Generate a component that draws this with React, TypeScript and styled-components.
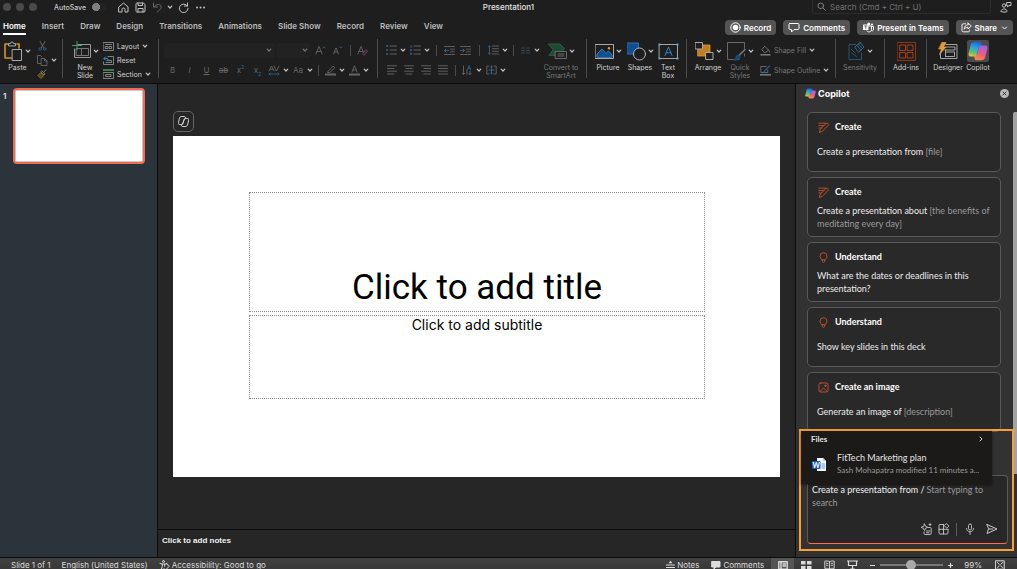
import React, { useState } from "react";
import styled, { createGlobalStyle } from "styled-components";

const ui = `Inter, "Liberation Sans", sans-serif`;
const humanist = `Lato, "Open Sans", sans-serif`;

const GlobalStyle = createGlobalStyle`
  *, *::before, *::after { box-sizing: border-box; }
  body { margin: 0; background: #1e1e1e; color: #e4e4e4; font-family: ${ui}; font-size: 8px; overflow: hidden; }
  button, input, select { font: inherit; color: inherit; margin: 0; padding: 0; border: 0; background: none; }
  button { cursor: pointer; white-space: nowrap; }
  input:focus, select:focus { outline: none; }
  svg { display: block; flex: none; }
`;

/* ---------- icon primitives ---------- */

type IconProps = { w: number; h: number; sw?: number; color?: string; children: React.ReactNode };

const Icon = ({ w, h, sw = 1, color, children }: IconProps) => (
  <svg width={w} height={h} viewBox={`0 0 ${w} ${h}`} fill="none" color={color} stroke="currentColor" strokeWidth={sw} strokeLinecap="round" strokeLinejoin="round" aria-hidden="true">
    {children}
  </svg>
);

const ChevronDown = () => (
  <Icon w={6} h={6} sw={1.2} color="#c4c4c4"><path d="M1.2 2.2 3 4 4.8 2.2" /></Icon>
);

const lobe = "M7 .8h4.500c1 0 1.500.5 1.800 1.500l.7 2.500c-2 .2-3 1.300-3.500 3.200L8.700 14c-.3 1.200-1 1.600-2 1.600H3C1 15.600.2 14.500.6 12.500L2.700 4C3.300 1.800 4.500.8 7 .8z";

const CopilotLogo = ({ size }: { size: number }) => {
  const id = `copilot${size}`;
  return (
    <svg width={size} height={size} viewBox="0 0 20 20" aria-hidden="true">
      <defs>
        <linearGradient id={`${id}a`} x1="0.6" y1="0" x2="0.3" y2="1">
          <stop offset="0" stopColor="#1f5fd6" />
          <stop offset="0.4" stopColor="#26a6e0" />
          <stop offset="0.75" stopColor="#67c26a" />
          <stop offset="1" stopColor="#f2c02f" />
        </linearGradient>
        <linearGradient id={`${id}b`} x1="0.6" y1="0" x2="0.3" y2="1">
          <stop offset="0" stopColor="#f58a4b" />
          <stop offset="0.4" stopColor="#ee5a86" />
          <stop offset="1" stopColor="#a85be8" />
        </linearGradient>
      </defs>
      <path d={lobe} fill={`url(#${id}b)`} transform="rotate(180 10 10)" />
      <path d={lobe} fill={`url(#${id}a)`} />
    </svg>
  );
};

/* ---------- title bar ---------- */

const Window = styled.div`
  display: flex;
  flex-direction: column;
  height: 100vh;
  overflow: hidden;
`;

const TitleBar = styled.header`
  display: grid;
  grid-template-columns: 1fr auto 1fr;
  align-items: center;
  height: 14px;
  flex: none;
`;

const TitleLeft = styled.div`
  display: flex;
  align-items: center;
  gap: 5px;
  padding-left: 3px;
`;

const WindowDot = styled.span`
  width: 8px;
  height: 8px;
  border-radius: 50%;
  background: #4a4a4a;
`;

const AutoSave = styled.label`
  display: flex;
  align-items: center;
  gap: 6px;
  margin-left: 12px;
  font-size: 7px;
  font-weight: 500;
  color: #c8c8c8;
`;

const Toggle = styled.input`
  appearance: none;
  width: 15px;
  height: 8px;
  border-radius: 4px;
  background: radial-gradient(circle at 4px 4px, #808080 4px, transparent 4px) #222;
`;

const QuickButton = styled.button<{ $w?: number; $dim?: boolean }>`
  display: flex;
  justify-content: center;
  width: ${(p) => p.$w ?? 12}px;
  color: ${(p) => (p.$dim ? "#6a6a6a" : "#c4c4c4")};
`;

const QuickAccess = styled.div`
  display: flex;
  align-items: center;
  gap: 5px;
  margin-left: 5px;
`;

const DocTitle = styled.h1`
  margin: 0;
  font-size: 8px;
  font-weight: 500;
  color: #e4e4e4;
`;

const TitleRight = styled.div`
  display: flex;
  justify-content: flex-end;
  align-items: center;
  gap: 9px;
  padding-right: 5px;
`;

const SearchBox = styled.label`
  display: flex;
  align-items: center;
  gap: 4px;
  width: 179px;
  height: 14px;
  padding-left: 4px;
  border: 1px solid #2b2b2b;
  border-top: 0;
  border-radius: 0 0 3px 3px;
  color: #8a8a8a;
`;

const SearchInput = styled.input`
  flex: 1;
  min-width: 0;
  &::placeholder { color: #737373; opacity: 1; }
`;

/* ---------- tabs ---------- */

const TabRow = styled.div`
  display: flex;
  justify-content: space-between;
  align-items: center;
  height: 24px;
  padding: 3px 4px 0 3px;
  flex: none;
`;

const Tabs = styled.nav`
  display: flex;
  gap: 16px;
`;

const Tab = styled.button<{ $active?: boolean }>`
  height: 15px;
  padding-bottom: 1px;
  border-bottom: 2px solid ${(p) => (p.$active ? "#fff" : "transparent")};
  line-height: 12px;
  font-weight: 600;
  color: ${(p) => (p.$active ? "#fff" : "#bcbcbc")};
`;

const Actions = styled.div`
  display: flex;
  gap: 7px;
`;

const ActionButton = styled.button`
  display: flex;
  align-items: center;
  gap: 3px;
  height: 15px;
  padding: 0 5px;
  border-radius: 4px;
  background: #545454;
  color: #fff;
  font-weight: 600;
`;

/* ---------- ribbon ---------- */

const Ribbon = styled.div`
  display: flex;
  height: 46px;
  padding-top: 1px;
  border-bottom: 1px solid #0c0c0c;
  flex: none;
`;

const Group = styled.section<{ $w?: number; $pad?: number }>`
  display: flex;
  flex: none;
  width: ${(p) => (p.$w ? `${p.$w}px` : "auto")};
  height: 39px;
  padding-left: ${(p) => p.$pad ?? 5}px;
  border-right: ${(p) => (p.$w ? "1px solid #4a4a4a" : "0")};
`;

const BigButton = styled.button<{ $w: number; $dim?: boolean }>`
  display: flex;
  flex-direction: column;
  align-items: center;
  flex: none;
  width: ${(p) => p.$w}px;
  height: 41px;
  padding-top: 1px;
  font-size: 7px;
  line-height: 8px;
  color: ${(p) => (p.$dim ? "#787878" : "#d2d2d2")};
`;

const BigIcon = styled.span<{ $lit?: boolean }>`
  display: flex;
  align-items: center;
  justify-content: center;
  gap: 2px;
  min-width: 22px;
  height: 22px;
  margin-bottom: 2px;
  border-radius: 2px;
  background: ${(p) => (p.$lit ? "#4c4c4c" : "transparent")};
`;

const Stack = styled.div<{ $top?: number; $left?: number }>`
  display: flex;
  flex-direction: column;
  padding-top: ${(p) => p.$top ?? 0}px;
  padding-left: ${(p) => p.$left ?? 0}px;
`;

const Row = styled.div<{ $h: number }>`
  display: flex;
  align-items: center;
  flex: none;
  height: ${(p) => p.$h}px;
`;

const Cell = styled.button<{ $w?: number }>`
  display: flex;
  align-items: center;
  justify-content: center;
  width: ${(p) => p.$w ?? 16}px;
  height: 14px;
  color: #666;
`;

const Drop = styled(Cell)`
  width: 8px;
`;

const CellRule = styled.span<{ $w: number }>`
  display: flex;
  justify-content: center;
  width: ${(p) => p.$w}px;
  &::before { content: ""; width: 1px; height: 11px; background: #4a4a4a; }
`;

const TextButton = styled.button<{ $dim?: boolean }>`
  display: flex;
  align-items: center;
  gap: 3px;
  font-size: 7px;
  color: ${(p) => (p.$dim ? "#787878" : "#d2d2d2")};
`;

const SelectBox = styled.span<{ $w: number }>`
  display: flex;
  align-items: center;
  width: ${(p) => p.$w}px;
  height: 15px;
  margin-right: 1px;
  padding-right: 3px;
  border-radius: 2px;
  background: #222;
  svg { color: #777; }
`;

const Select = styled.select`
  appearance: none;
  flex: 1;
  min-width: 0;
  height: 15px;
`;

/* ---------- workspace ---------- */

const Workspace = styled.main`
  display: flex;
  flex: 1;
  min-height: 0;
`;

const Thumbs = styled.aside`
  display: flex;
  align-items: flex-start;
  gap: 6px;
  width: 158px;
  flex: none;
  padding: 4px 12px 0 3px;
  border-right: 1px solid #0c0c0c;
  background: #2a343a;
`;

const ThumbNumber = styled.span`
  width: 4px;
  padding-top: 3px;
  line-height: 10px;
  font-weight: 600;
`;

const Thumb = styled.button`
  flex: 1;
  height: 76px;
  border: 2px solid #ef6c52;
  border-radius: 4px;
  background: #fff;
  box-shadow: inset 0 0 0 1px #c9c9c9;
`;

const Editor = styled.section`
  display: flex;
  flex-direction: column;
  flex: 1;
  min-width: 0;
  background: #262626;
`;

const Canvas = styled.div`
  display: flex;
  flex-direction: column;
  align-items: flex-start;
  gap: 4px;
  flex: 1;
  min-height: 0;
  padding: 27px 15px 0;
`;

const CopilotChip = styled.button`
  display: grid;
  place-items: center;
  width: 21px;
  height: 21px;
  border: 1px solid #656565;
  border-radius: 5px;
  color: #d8d8d8;
`;

const Slide = styled.div`
  display: flex;
  flex-direction: column;
  gap: 3px;
  width: 100%;
  aspect-ratio: 16 / 9;
  padding: 56px 75px 0 76px;
  background: #fff;
  color: #000;
`;

const Placeholder = styled.div<{ $h: number; $end?: boolean }>`
  display: flex;
  align-items: ${(p) => (p.$end ? "flex-end" : "flex-start")};
  height: ${(p) => p.$h}px;
  border: 1px dotted #8a8a8a;
`;

const TitleInput = styled.input`
  width: 100%;
  height: 47px;
  font-family: Roboto, sans-serif;
  font-size: 35px;
  text-align: center;
  &::placeholder { color: #000; opacity: 1; }
`;

const SubtitleInput = styled(TitleInput)`
  height: 17px;
  font-family: ${ui};
  font-size: 14px;
`;

const NotesPane = styled.div`
  height: 28px;
  padding: 4px;
  border-top: 1px solid #0c0c0c;
`;

const NotesInput = styled.input`
  display: block;
  width: 100%;
  height: 12px;
  font-family: "Liberation Sans", sans-serif;
  font-weight: 700;
  &::placeholder { color: #f0f0f0; opacity: 1; }
`;

/* ---------- copilot panel ---------- */

const Panel = styled.aside`
  position: relative;
  display: flex;
  flex-direction: column;
  width: 222px;
  flex: none;
  border-left: 1px solid #0c0c0c;
  background: #323232;
`;

const PanelHead = styled.div`
  display: flex;
  align-items: center;
  gap: 2px;
  height: 18px;
  padding: 0 8px 0 9px;
  flex: none;
`;

const PanelTitle = styled.h2`
  flex: 1;
  margin: 0;
  font-size: 9px;
  font-weight: 700;
  color: #fff;
`;

const CloseButton = styled.button`
  color: #323232;
`;

const Cards = styled.div`
  display: flex;
  flex-direction: column;
  gap: 5px;
  flex: 1;
  min-height: 0;
  overflow: hidden;
  padding: 10px 16px 0 11px;
  font-family: ${humanist};
  font-size: 9px;
`;

const Card = styled.button`
  display: flex;
  flex-direction: column;
  flex: none;
  height: 60px;
  padding: 7px 8px 0 9px;
  border: 1px solid #5a5a5a;
  border-radius: 5px;
  background: #292929;
  text-align: left;
  white-space: normal;
  color: #ececec;
`;

const CardHead = styled.span`
  display: flex;
  align-items: center;
  gap: 6px;
  height: 14px;
  padding-left: 1px;
  line-height: 12px;
  font-weight: 700;
  color: #fff;
  svg { color: #c8532c; }
`;

const CardBody = styled.span`
  display: flex;
  align-items: center;
  flex: 1;
  padding-bottom: 2px;
  line-height: 13px;
`;

const Muted = styled.span`
  color: #9a9a9a;
`;

const Scrollbar = styled.div`
  position: absolute;
  top: 28px;
  right: 0;
  bottom: 83px;
  width: 4px;
  border-radius: 2px 0 0 2px;
  background: #a3a3a3;
`;

const PromptFrame = styled.div`
  position: relative;
  z-index: 1;
  flex: none;
  margin: -4px 3px 6px;
  padding: 44px 4px 5px 6px;
  border: 2px solid #f6a03a;
  font-family: ${humanist};
  font-size: 9px;
`;

const FileMenu = styled.div`
  position: absolute;
  top: 0;
  left: 0;
  width: 191px;
  height: 53px;
  background: #1b1a19;
  box-shadow: 0 1px 3px rgba(0, 0, 0, 0.5);
`;

const FileMenuHead = styled.button`
  display: flex;
  justify-content: space-between;
  align-items: center;
  width: 100%;
  height: 16px;
  padding: 0 8px 0 10px;
  font-size: 8px;
  font-weight: 700;
`;

const FileItem = styled.button`
  display: flex;
  align-items: center;
  gap: 10px;
  padding: 5px 0 0 11px;
  text-align: left;
`;

const FileText = styled.span`
  display: flex;
  flex-direction: column;
  line-height: 12px;
  small { font-size: 8px; color: #9a9a9a; }
`;

const Composer = styled.div`
  display: flex;
  flex-direction: column;
  justify-content: space-between;
  height: 69px;
  padding: 7px 8px 7px 4px;
  border: 1px solid #5a5a5a;
  border-bottom: 1px solid #ff6f47;
  border-radius: 4px;
  background: #272727;
`;

const PromptLine = styled.label`
  display: block;
  line-height: 13px;
`;

const PromptInput = styled.input`
  field-sizing: content;
  height: 13px;
  margin-right: 2px;
  color: #f2f2f2;
`;

const Tools = styled.div`
  display: flex;
  align-items: center;
  justify-content: flex-end;
  gap: 6px;
  height: 14px;
  color: #c8c8c8;
`;

const ToolRule = styled.span`
  width: 1px;
  height: 13px;
  background: #5a5a5a;
`;

/* ---------- status bar ---------- */

const StatusBar = styled.footer`
  display: flex;
  justify-content: space-between;
  height: 12px;
  flex: none;
  background: linear-gradient(#414141, #383838);
  border-top: 1px solid #0c0c0c;
  color: #dcdcdc;
`;

const StatusGroup = styled.div<{ $gap: number }>`
  display: flex;
  align-items: center;
  gap: ${(p) => p.$gap}px;
  height: 14px;
  padding: 0 12px 0 11px;
`;

const StatusButton = styled.button<{ $lit?: boolean }>`
  display: flex;
  align-items: center;
  justify-content: center;
  gap: 2px;
  min-width: ${(p) => (p.$lit ? 23 : 0)}px;
  height: 14px;
  background: ${(p) => (p.$lit ? "#555" : "none")};
`;

const Views = styled.div`
  display: flex;
  align-items: center;
  gap: 12px;
  margin-left: -5px;
`;

const ZoomControl = styled.div`
  display: flex;
  align-items: center;
  gap: 5px;
  margin-right: 1px;
`;

const ZoomSlider = styled.input`
  appearance: none;
  width: 63px;
  height: 10px;
  background: linear-gradient(#777, #777) center / 100% 2px no-repeat;
  &::-webkit-slider-thumb {
    appearance: none;
    width: 10px;
    height: 10px;
    border-radius: 50%;
    background: #a8a8a8;
  }
`;

const ZoomValue = styled.span`
  margin-left: 6px;
`;

/* ---------- drawings ---------- */

const lines = (ys: number[], x1: number, x2: number) => ys.map((y) => <path key={y} d={`M${x1} ${y}H${x2}`} />);

const BLUE = "#285a80";

const PasteIcon = () => (
  <Icon w={19} h={21}>
    <path d="M4 3H1v14h7M13 3h2v4" stroke="#d98f2b" strokeWidth="1.6" />
    <path d="M4.500 4.500v-2h2a1.500 1.500 0 0 1 3 0h2v2z" stroke="#aaa" />
    <rect x="8.500" y="8.500" width="9" height="11" fill="#1e1e1e" stroke="#aaa" />
  </Icon>
);
const NewSlideIcon = () => (
  <Icon w={19} h={20}>
    <path d="M6 3.500h12.500v13H2.500V8" stroke="#999" />
    <path d="M4.500 7.500h12v7h-12zM9.500 7.500v7M4.500 11" stroke="#777" />
    <path d="M5 0v9M.5 4.500h9" stroke="#3fa465" />
  </Icon>
);
const LayoutIcon = () => (
  <Icon w={11} h={9}><path d="M.5.5h10v8H.5zM2.500 2.500h6M2.500 4.500h2.500v2H2.500zM6.500 4.500h2v2h-2z" stroke="#999" strokeWidth=".8" /></Icon>
);
const ResetIcon = () => (
  <Icon w={11} h={9}>
    <path d="M5 .5h5.500v8H.5V6M4 4.500h4.500v2H3" stroke="#999" strokeWidth=".8" />
    <path d="M1 2.500h3.500M2.500.8.8 2.500l1.700 1.700M4.500 2.500c1 0 1 2 0 2" stroke="#2f86c5" />
  </Icon>
);
const SectionIcon = () => (
  <Icon w={11} h={10}>
    <path d="M0 1h11" stroke="#3fa465" strokeWidth="1.4" />
    <path d="M.5 3.500h10v6H.5zM3 5.500h5v2H3z" stroke="#999" strokeWidth=".8" />
  </Icon>
);
const CutIcon = () => (
  <Icon w={9} h={10}><path d="M2 .5 5.800 7M7 .5 3.200 7" stroke="#777" strokeWidth=".8" /><circle cx="2.300" cy="8" r="1.300" stroke={BLUE} /><circle cx="6.700" cy="8" r="1.300" stroke={BLUE} /></Icon>
);
const CopyIcon = () => (
  <Icon w={11} h={11} sw={0.9}><path d="M3.500 8.500h-3v-8h3l1.500 1.500M4.500 3.500h3l2.500 2.500v4.500h-5.500zM7.500 3.500v2.500h2.500" /></Icon>
);
const BrushIcon = () => (
  <Icon w={10} h={10}><path d="M9 .8 6.500 3.500M4 3l3 3 1-1-3-3z" stroke="#777" /><path d="M3.500 4 .8 6.500l3 3L6.500 7z" stroke="#8a6226" fill="#5c4522" /></Icon>
);
const SmartArtIcon = () => (
  <Icon w={19} h={18}>
    <path d="M.5 2h11.500l4.500 4.500-2 3H7v4H1l4-5.500z" fill="#1d4a30" stroke="#2c5f42" />
    <path d="M7.500 9.500h11v7h-11zM10 12h6M10 14h6" fill="#1e1e1e" stroke="#6a6a6a" />
  </Icon>
);
const PictureIcon = () => (
  <Icon w={19} h={15}>
    <rect x=".5" y=".5" width="18" height="14" stroke="#aaa" />
    <path d="M2 13V10l5-5 4 4.500 2.500-2.500 3.500 4V13z" fill="#0e4f92" stroke="#3f8fd0" strokeWidth=".8" />
    <circle cx="14" cy="4.300" r="1.200" fill="#e39a34" stroke="none" />
  </Icon>
);
const ShapesIcon = () => (
  <Icon w={19} h={19}>
    <rect x=".5" y="1" width="11" height="11" fill="#0e4f92" stroke="#2a74ba" />
    <circle cx="12.500" cy="12" r="6" fill="#1e1e1e" stroke="#b4b4b4" />
  </Icon>
);
const TextBoxIcon = () => (
  <Icon w={21} h={17}>
    <rect x="1.500" y="1.500" width="18" height="14" stroke="#a4a4a4" />
    <path d="M7 12.500 10.500 4l3.500 8.500M8.200 9.800h4.600" stroke="#2f86c5" />
    <path d="M.5.5h2v2h-2zM18.500.5h2v2h-2zM.5 14.500h2v2h-2zM18.500 14.500h2v2h-2z" fill="#5aa4dc" stroke="none" />
  </Icon>
);
const ArrangeIcon = () => (
  <Icon w={19} h={18}>
    <rect x="3" y="3" width="12" height="11" fill="#c47d1c" stroke="#e09a38" strokeWidth=".8" />
    <rect x=".5" y=".5" width="7" height="6.500" fill="#1e1e1e" stroke="#aaa" />
    <rect x="11" y="10.500" width="7" height="7" fill="#1e1e1e" stroke="#aaa" />
  </Icon>
);
const QuickStylesIcon = () => (
  <Icon w={19} h={19}>
    <path d="M12 17.500H.5V.5h17v6M17.500 12v2" stroke="#686868" />
    <path d="M18 7.500 12.500 13" stroke="#777" strokeWidth="1.600" />
    <path d="M12 13c-2 0-3 1-3.200 2.500-.2 1-1 2-2.300 2.300 3 .8 6 .2 6.500-2.600z" fill="#164672" stroke={BLUE} strokeWidth=".8" />
  </Icon>
);
const FillIcon = () => (
  <Icon w={11} h={11}><path d="M5 1.500 8.500 5 5 7.800 2 5zM8.500 5l1.200 2" stroke="#777" strokeWidth=".9" /><path d="M.5 9.800h10" stroke="#777" strokeWidth="1.600" strokeLinecap="butt" /></Icon>
);
const OutlineIcon = () => (
  <Icon w={11} h={11}><path d="M6 1.500H.8V7.500h7V5" stroke="#777" strokeWidth=".8" /><path d="M9.500 1 4 6.500" stroke={BLUE} strokeWidth="1.400" /><path d="M0 9.800h11" stroke="#777" strokeWidth="1.600" strokeLinecap="butt" /></Icon>
);
const SensitivityIcon = () => (
  <Icon w={17} h={20}>
    <path d="M8 3.500H1v15h12.500V12M3.500 8.500 7 12M3.500 12l5 3.500" stroke="#285a80" strokeWidth=".9" />
    <path d="m7 6 5-4.500 4 4.500-5 5zM9 4.500l4 4.500M10.500 3l4 4.500M12 .8l1.500 1.500" stroke="#34709c" strokeWidth=".9" />
  </Icon>
);
const AddInsIcon = () => (
  <Icon w={19} h={19}>
    <rect x=".5" y=".5" width="18" height="18" stroke="#8c3416" />
    <path d="M3 3h5.500v5.500H3zM10.500 3H16v5.500h-5.500zM3 10.500h5.500V16H3zM10.500 10.500H16V16h-5.500z" stroke="#ab3f1a" />
  </Icon>
);
const DesignerIcon = () => (
  <Icon w={20} h={19}>
    <path d="M8 2.500h11v14H2.500V12M8 5h9v3H7M7.500 8v6.500M7.500 14.500h9V10h-9" stroke="#a4a4a4" />
    <path d="M4 .5h4L5.500 5H8L1.500 12.500 3.500 7H1z" fill="#e69b35" stroke="#f0b055" strokeWidth=".6" />
  </Icon>
);

const Bullets = () => (
  <Icon w={11} h={10} sw={0.9}>{lines([1, 5, 9], 4, 10.5)}<path d="M1 1h.1M1 5h.1M1 9h.1" stroke="#2f6a98" strokeWidth="1.800" /></Icon>
);
const Numbers = () => (
  <Icon w={11} h={10} sw={0.9}>{lines([1, 5, 9], 4, 10.5)}<path d="M1 .5v1.800M.5 4.500h1v1h-1M.5 8h1v1.500h-1" stroke="#2f6a98" /></Icon>
);
const Indent = ({ flip }: { flip?: boolean }) => (
  <Icon w={11} h={9} sw={0.9}>
    {lines([0.5, 8.5], 0.5, 10.5)}{lines([3.2, 5.8], 6.5, 10.5)}
    <path d={flip ? "M.5 4.500h4M3 3l1.500 1.500L3 6" : "M4.500 4.500h-4M2 3 .5 4.500 2 6"} stroke="#2f6a98" />
  </Icon>
);
const Spacing = () => (
  <Icon w={11} h={10} sw={0.9}>{lines([1, 3.7, 6.3, 9], 4.5, 10.5)}<path d="M1.500.8v8.400M.3 2 1.500.8 2.700 2M.3 8l1.200 1.200L2.700 8" stroke="#2f6a98" strokeWidth=".8" /></Icon>
);
const Columns = () => (
  <Icon w={9} h={7} sw={0.9}><g stroke="#34506a">{lines([1, 3.5, 6], 0.5, 3.5)}</g><g stroke="#34506a">{lines([1, 3.5, 6], 5.5, 8.5)}</g></Icon>
);
const Align = ({ kind }: { kind: "l" | "c" | "r" | "j" }) => {
  const short = { l: [0.5, 7], c: [2, 8], r: [3, 9.5], j: [0.5, 9.5] }[kind];
  return <Icon w={10} h={10} sw={0.9}>{lines([0.8, 6.2], 0.5, 9.5)}{lines([3.5, 9], short[0], short[1])}</Icon>;
};
const TextDirection = () => (
  <Icon w={10} h={11} sw={0.9}><path d="M1.500 1v8.500M.3 8.300l1.200 1.200 1.200-1.200M8 6v3.500M7 8.500l1 1 1-1M5 5v4.500" /><path d="m5.500 4.500 1.500-4 1.500 4M6 3.300h2" stroke="#2f6a98" strokeWidth=".8" /></Icon>
);
const AlignText = () => (
  <Icon w={11} h={10} sw={0.9}><path d="M3 1H.8v8H3M8 1h2.200v8H8M3 5h5" /><path d="M5.500 1v8M4.500 2l1-1 1 1M4.500 8l1 1 1-1" stroke="#2f6a98" /></Icon>
);
const LetterA = ({ mark, small }: { mark?: "up" | "down" | "bar" | "eraser"; small?: boolean }) => (
  <Icon w={11} h={11} sw={0.9}>
    <path d={small ? "M1.500 9 4 3l2.500 6M2.300 7h3.400" : mark === "bar" ? "M3 7 5.500.8 8 7M3.800 5h3.400" : "M.8 9 4 1.500 7.200 9M2 6.500h4"} />
    {mark === "up" && <path d="m8 3 1.200-1.200L10.400 3" stroke="#2f6a98" />}
    {mark === "down" && <path d="m7.500 1.800 1.200 1.200 1.200-1.200" stroke="#2f6a98" />}
    {mark === "bar" && <path d="M0 9.500h11" strokeWidth="2" strokeLinecap="butt" />}
    {mark === "eraser" && <path d="m5.500 8.500 3.500-4 1.700 1.700-3.500 4z" stroke="#6b3f6c" fill="#3c263e" />}
  </Icon>
);
const Highlighter = () => (
  <Icon w={11} h={11} sw={0.9}><path d="m3 6.500 5-5.500 1.800 1.800-5 4.700H3z" /><path d="M0 9.500h11" strokeWidth="2" strokeLinecap="butt" /></Icon>
);

const Glyph = styled.span<{ $style?: "italic" | "underline" | "strike" }>`
  font-size: 8px;
  font-style: ${(p) => (p.$style === "italic" ? "italic" : "normal")};
  text-decoration: ${(p) => (p.$style === "underline" ? "underline" : p.$style === "strike" ? "line-through" : "none")};
  sup, sub { font-size: 5px; line-height: 0; color: #2f6a98; }
`;

const CreateIcon = () => (
  <Icon w={11} h={11} sw={0.9}><path d="M.8 1.200h7M.8 3.600h5M.8 6h2.500M1.500 10l.8-3L8 1.500c1.500-1 3 .5 2 2L4.500 9.200z" /></Icon>
);
const BulbIcon = () => (
  <Icon w={11} h={11} sw={0.9}><path d="M3.800 7.500C2.800 6.500 2 5.500 2 4.200a3.500 3.500 0 0 1 7 0c0 1.300-.8 2.300-1.800 3.300zM4 7.500l.4 2c.1.500.4.8.8.8h.6c.4 0 .7-.3.800-.8l.4-2" /></Icon>
);
const ImageIcon = () => (
  <Icon w={11} h={11} sw={0.9}><rect x="1" y="1" width="9" height="9" rx="1.500" /><path d="m2 9.500 3.500-3.700L9 9.500" /><circle cx="7.300" cy="3.700" r=".8" /></Icon>
);

/* ---------- composition ---------- */

const tabNames = ["Home", "Insert", "Draw", "Design", "Transitions", "Animations", "Slide Show", "Record", "Review", "View"];

const cards = [
  { icon: <CreateIcon />, title: "Create", text: "Create a presentation from ", slot: "[file]" },
  { icon: <CreateIcon />, title: "Create", text: "Create a presentation about ", slot: "[the benefits of meditating every day]" },
  { icon: <BulbIcon />, title: "Understand", text: "What are the dates or deadlines in this presentation?" },
  { icon: <BulbIcon />, title: "Understand", text: "Show key slides in this deck" },
  { icon: <ImageIcon />, title: "Create an image", text: "Generate an image of ", slot: "[description]" },
];

type BigProps = { w: number; icon: React.ReactNode; label: React.ReactNode; drop?: boolean; dim?: boolean; lit?: boolean };

const Big = ({ w, icon, label, drop, dim, lit }: BigProps) => (
  <BigButton $w={w} $dim={dim}>
    <BigIcon $lit={lit}>{icon}{drop && <ChevronDown />}</BigIcon>
    {label}
  </BigButton>
);

const DropCell = ({ name }: { name: string }) => <Drop aria-label={name}><ChevronDown /></Drop>;

const RibbonBar = () => (
  <Ribbon>
    <Group $w={63} $pad={1}>
      <Big w={33} icon={<PasteIcon />} label="Paste" drop />
      <Stack>
        <Row $h={14}><Cell aria-label="Cut"><CutIcon /></Cell></Row>
        <Row $h={14}><Cell aria-label="Copy"><CopyIcon /></Cell><DropCell name="Copy options" /></Row>
        <Row $h={14}><Cell aria-label="Format painter"><BrushIcon /></Cell></Row>
      </Stack>
    </Group>
    <Group $w={96} $pad={5}>
      <Big w={34} icon={<NewSlideIcon />} label={<>New<br />Slide</>} drop />
      <Stack $left={1}>
        <Row $h={14}><TextButton><LayoutIcon />Layout<ChevronDown /></TextButton></Row>
        <Row $h={14}><TextButton><ResetIcon />Reset</TextButton></Row>
        <Row $h={14}><TextButton><SectionIcon />Section<ChevronDown /></TextButton></Row>
      </Stack>
    </Group>
    <Group $w={219}>
      <Stack $top={1}>
        <Row $h={20}>
          <SelectBox $w={111}><Select aria-label="Font"><option /></Select><ChevronDown /></SelectBox>
          <SelectBox $w={35}><Select aria-label="Font size"><option /></Select><ChevronDown /></SelectBox>
          <Cell $w={17} aria-label="Grow font"><LetterA mark="up" /></Cell>
          <Cell $w={17} aria-label="Shrink font"><LetterA mark="down" small /></Cell>
          <CellRule $w={8} />
          <Cell $w={17} aria-label="Clear formatting"><LetterA mark="eraser" /></Cell>
        </Row>
        <Row $h={20}>
          <Cell $w={17}><Glyph>B</Glyph></Cell>
          <Cell $w={17}><Glyph $style="italic">I</Glyph></Cell>
          <Cell $w={17}><Glyph $style="underline">U</Glyph></Cell>
          <Cell $w={17}><Glyph $style="strike">ab</Glyph></Cell>
          <Cell $w={17}><Glyph>x<sup>2</sup></Glyph></Cell>
          <Cell $w={17}><Glyph>x<sub>2</sub></Glyph></Cell>
          <Cell aria-label="Character spacing">
            <Icon w={12} h={11} sw={0.9}><path d="m1 6 2.500-5L6 6M2 4.300h3M6 1l2.500 5L11 1" /><path d="M1 9h10M2.200 7.800 1 9l1.200 1.200M9.800 7.800 11 9l-1.200 1.200" stroke="#2f6a98" strokeWidth=".8" /></Icon>
          </Cell>
          <DropCell name="Spacing options" />
          <Cell><Glyph>Aa</Glyph></Cell>
          <DropCell name="Case options" />
          <CellRule $w={8} />
          <Cell aria-label="Highlight"><Highlighter /></Cell>
          <DropCell name="Highlight colors" />
          <Cell aria-label="Font color"><LetterA mark="bar" /></Cell>
          <DropCell name="Font colors" />
        </Row>
      </Stack>
    </Group>
    <Group $w={209}>
      <Stack $top={1}>
        <Row $h={20}>
          <Cell aria-label="Bullets"><Bullets /></Cell><DropCell name="Bullet styles" />
          <Cell aria-label="Numbering"><Numbers /></Cell><DropCell name="Number styles" />
          <CellRule $w={10} />
          <Cell aria-label="Decrease indent"><Indent /></Cell>
          <Cell aria-label="Increase indent"><Indent flip /></Cell>
          <CellRule $w={12} />
          <Cell aria-label="Line spacing"><Spacing /></Cell><DropCell name="Line spacing options" />
          <CellRule $w={8} />
          <Cell aria-label="Columns"><Columns /></Cell><DropCell name="Column options" />
        </Row>
        <Row $h={20}>
          <Cell $w={17} aria-label="Align left"><Align kind="l" /></Cell>
          <Cell $w={17} aria-label="Center"><Align kind="c" /></Cell>
          <Cell $w={17} aria-label="Align right"><Align kind="r" /></Cell>
          <Cell $w={17} aria-label="Justify"><Align kind="j" /></Cell>
          <CellRule $w={8} />
          <Cell aria-label="Text direction"><TextDirection /></Cell><DropCell name="Direction options" />
          <Cell aria-label="Align text"><AlignText /></Cell><DropCell name="Align text options" />
        </Row>
      </Stack>
      <Big w={40} icon={<SmartArtIcon />} label={<>Convert to<br />SmartArt</>} drop dim />
    </Group>
    <Group $w={100}>
      <Big w={32} icon={<PictureIcon />} label="Picture" drop />
      <Big w={32} icon={<ShapesIcon />} label="Shapes" drop />
      <Big w={24} icon={<TextBoxIcon />} label={<>Text<br />Box</>} />
    </Group>
    <Group $w={149}>
      <Big w={32} icon={<ArrangeIcon />} label="Arrange" drop />
      <Big w={32} icon={<QuickStylesIcon />} label={<>Quick<br />Styles</>} drop dim />
      <Stack $top={1} $left={4}>
        <Row $h={20}><TextButton $dim><FillIcon />Shape Fill<ChevronDown /></TextButton></Row>
        <Row $h={20}><TextButton $dim><OutlineIcon />Shape Outline<ChevronDown /></TextButton></Row>
      </Stack>
    </Group>
    <Group $w={49}>
      <Big w={38} icon={<SensitivityIcon />} label="Sensitivity" drop dim />
    </Group>
    <Group $w={42}>
      <Big w={32} icon={<AddInsIcon />} label="Add-ins" />
    </Group>
    <Group>
      <Big w={32} icon={<DesignerIcon />} label="Designer" />
      <Big w={28} icon={<CopilotLogo size={20} />} label="Copilot" lit />
    </Group>
  </Ribbon>
);

export default function App() {
  const [prompt, setPrompt] = useState("Create a presentation from /");
  const [zoom, setZoom] = useState(99);

  return (
    <Window>
      <GlobalStyle />
      <TitleBar>
        <TitleLeft>
          <WindowDot /><WindowDot /><WindowDot />
          <AutoSave>AutoSave<Toggle type="checkbox" /></AutoSave>
          <QuickAccess>
            <QuickButton aria-label="Home"><Icon w={11} h={11}><path d="M1 4.800 5.500 1 10 4.800V10H7V7.500a1.500 1.500 0 0 0-3 0V10H1z" /></Icon></QuickButton>
            <QuickButton aria-label="Save"><Icon w={11} h={11}><path d="M1 2c0-.6.400-1 1-1h6.500L10 2.500V9c0 .6-.4 1-1 1H2c-.6 0-1-.4-1-1zM3 1v2.500h4.500V1M3 10V6.500h5V10" /></Icon></QuickButton>
            <QuickButton $dim aria-label="Undo"><Icon w={11} h={11}><path d="M1.500 1v4h4M1.800 4.800C4 2 9 1.500 9.200 5 9.300 7 7 8.500 5 10.200" /></Icon></QuickButton>
            <QuickButton $w={4} aria-label="Undo history"><ChevronDown /></QuickButton>
            <QuickButton aria-label="Redo"><Icon w={11} h={11}><path d="M9.500 1v3h-3M9.300 4A4.300 4.300 0 1 0 10 6.200" /></Icon></QuickButton>
            <QuickButton aria-label="More"><Icon w={11} h={11} sw={1.8}><path d="M2 5.500h.1M5.500 5.500h.1M9 5.500h.1" /></Icon></QuickButton>
          </QuickAccess>
        </TitleLeft>
        <DocTitle>Presentation1</DocTitle>
        <TitleRight>
          <SearchBox>
            <Icon w={9} h={9} sw={0.9}><circle cx="3.800" cy="3.800" r="2.800" /><path d="m6 6 2.500 2.500" /></Icon>
            <SearchInput placeholder="Search (Cmd + Ctrl + U)" aria-label="Search" />
          </SearchBox>
          <QuickButton aria-label="Account"><Icon w={12} h={12}><circle cx="4" cy="4.500" r="1.700" /><path d="M1 10.500c0-3.500 6-3.500 6 0 0 .8-6 .8-6 0M7 1.500h4v3H9l-1.500 1.300V4.500H7z" /></Icon></QuickButton>
        </TitleRight>
      </TitleBar>

      <TabRow>
        <Tabs aria-label="Ribbon tabs">
          {tabNames.map((t, i) => <Tab key={t} $active={i === 0}>{t}</Tab>)}
        </Tabs>
        <Actions>
          <ActionButton><Icon w={11} h={11}><circle cx="5.500" cy="5.500" r="4.700" /><circle cx="5.500" cy="5.500" r="2.800" fill="#fff" stroke="none" /></Icon>Record</ActionButton>
          <ActionButton><Icon w={12} h={11}><path d="M2 1.500h8c.6 0 1 .4 1 1v4c0 .6-.4 1-1 1H6L3.500 10V7.500H2c-.6 0-1-.4-1-1v-4c0-.6.400-1 1-1z" /></Icon>Comments</ActionButton>
          <ActionButton>
            <Icon w={12} h={11}>
              <circle cx="6.800" cy="2" r="1.500" fill="#fff" stroke="none" /><circle cx="10" cy="2.600" r="1" fill="#fff" stroke="none" />
              <path d="M6.500 4h3v3.500c0 3-4 3-4.500 1.500M10 4.500h1.500v3c0 1-1 1.500-1.700 1.200" />
              <rect x="1" y="2.500" width="5.500" height="5.500" rx=".6" fill="#fff" stroke="none" />
              <path d="M2.500 4h2.500M3.750 4v2.700" stroke="#545454" strokeWidth=".8" />
            </Icon>
            Present in Teams
          </ActionButton>
          <ActionButton>
            <Icon w={11} h={11} sw={0.9}><path d="M4.500 1.800H2.300C1.500 1.800 1 2.300 1 3v5.500c0 .8.500 1.300 1.300 1.300h5c.8 0 1.300-.5 1.300-1.300V8M7 1l3.300 3L7 7V5.300C5 5.200 4 6 3.300 7.200 3.300 4.500 4.700 2.800 7 2.700z" /></Icon>
            Share
            <Icon w={8} h={6}><path d="M2.500 2 4.500 4l2-2" /></Icon>
          </ActionButton>
        </Actions>
      </TabRow>

      <RibbonBar />

      <Workspace>
        <Thumbs>
          <ThumbNumber>1</ThumbNumber>
          <Thumb aria-label="Slide 1" />
        </Thumbs>

        <Editor>
          <Canvas>
            <CopilotChip aria-label="Copilot">
              <svg width="11" height="11" viewBox="0 0 20 20" fill="none" stroke="currentColor" strokeWidth="1.800" strokeLinejoin="round" aria-hidden="true">
                <path d={lobe} />
                <path d={lobe} transform="rotate(180 10 10)" />
              </svg>
            </CopilotChip>
            <Slide>
              <Placeholder $h={120} $end>
                <TitleInput placeholder="Click to add title" aria-label="Title" />
              </Placeholder>
              <Placeholder $h={84}>
                <SubtitleInput placeholder="Click to add subtitle" aria-label="Subtitle" />
              </Placeholder>
            </Slide>
          </Canvas>
          <NotesPane><NotesInput placeholder="Click to add notes" aria-label="Notes" /></NotesPane>
        </Editor>

        <Panel>
          <PanelHead>
            <CopilotLogo size={11} />
            <PanelTitle>Copilot</PanelTitle>
            <CloseButton aria-label="Close"><Icon w={9} h={9}><circle cx="4.500" cy="4.500" r="4.500" fill="#b8b8b8" stroke="none" /><path d="m3 3 3 3M6 3 3 6" /></Icon></CloseButton>
          </PanelHead>
          <Cards>
            {cards.map((c, i) => (
              <Card key={i}>
                <CardHead>{c.icon}{c.title}</CardHead>
                <CardBody><span>{c.text}{c.slot && <Muted>{c.slot}</Muted>}</span></CardBody>
              </Card>
            ))}
          </Cards>
          <Scrollbar />
          <PromptFrame>
            <Composer>
              <PromptLine>
                <PromptInput aria-label="Prompt" value={prompt} onChange={(e) => setPrompt(e.target.value)} />
                <Muted>Start typing to search</Muted>
              </PromptLine>
              <Tools>
                <button aria-label="Prompt ideas"><Icon w={12} h={12} sw={0.9}><path d="m4.500 1 1 2.300 2.300 1-2.300 1-1 2.300-1-2.300-2.300-1 2.300-1zM9 1.500h2M10 .5v2M6.500 8H10M6.500 9.800H9M8.500 4.500h1.700c.6 0 1 .4 1 1v5c0 .6-.4 1-1 1H5c-.6 0-1-.4-1-1V9" /></Icon></button>
                <button aria-label="Plugins"><Icon w={12} h={12} sw={0.9}><path d="M5.500 1.500H2c-.6 0-1 .4-1 1V10c0 .6.400 1 1 1h7c.6 0 1-.4 1-1V6.500M1 6.300h9M5.500 1.500V11M8.700.8l2.200 2.200-2.200 2.200L6.500 3z" /></Icon></button>
                <ToolRule />
                <button aria-label="Dictate"><Icon w={14} h={12} sw={0.9}><rect x="5.500" y="1" width="3" height="6" rx="1.500" /><path d="M3.500 5.500c0 4.500 7 4.500 7 0M7 9v2.500" /></Icon></button>
                <button aria-label="Send"><Icon w={16} h={12}><path d="M4 1.500 14 6 4 10.500 5.500 6zM5.500 6H10" /></Icon></button>
              </Tools>
            </Composer>
            <FileMenu>
              <FileMenuHead>Files<Icon w={6} h={6} sw={0.9}><path d="m2 1 2 2-2 2" /></Icon></FileMenuHead>
              <FileItem>
                <svg width="15" height="15" viewBox="0 0 15 15" aria-hidden="true">
                  <path d="M5 1h6l3 3v10H5z" fill="#f4f8fd" />
                  <path d="M11 1v3h3z" fill="#b9cdea" />
                  <path d="M9.500 7H13M9.500 9H13M9.500 11H13" stroke="#4c8fe0" strokeWidth=".9" />
                  <rect x="0" y="4" width="8.500" height="8" rx=".8" fill="#185abd" />
                  <text x="4.200" y="10.500" fontSize="7" fontWeight="700" textAnchor="middle" fill="#fff">W</text>
                </svg>
                <FileText>FitTech Marketing plan<small>Sash Mohapatra modified 11 minutes a...</small></FileText>
              </FileItem>
            </FileMenu>
          </PromptFrame>
        </Panel>
      </Workspace>

      <StatusBar>
        <StatusGroup $gap={11}>
          <span>Slide 1 of 1</span>
          <StatusButton>English (United States)</StatusButton>
          <StatusButton><Icon w={11} h={11}><circle cx="4.500" cy="1.500" r="1" /><path d="M1 3.500c2.300.8 4.700.8 7 0M3.300 4.200v2.500L2 10M5.700 4.200v2M5 8.500l1.500 1.500L10 6.500M8 4.500l2 1" /></Icon>Accessibility: Good to go</StatusButton>
        </StatusGroup>
        <StatusGroup $gap={12}>
          <StatusButton><Icon w={9} h={10}><path d="M.5 5h8M.5 7.500h8" /><path d="M2.500 3.300 4.500.8l2 2.500z" fill="currentColor" stroke="none" /><path d="M3 9.500h3" /></Icon>Notes</StatusButton>
          <StatusButton><Icon w={10} h={10}><path d="M1 1.500h8v5.500H5L3 9V7H1z" fill="currentColor" /></Icon>Comments</StatusButton>
          <Views>
            <StatusButton $lit aria-label="Normal view"><Icon w={10} h={9} sw={1.4}><path d="M.8.8h8.400v7.400H.8zM3 .8v7.400M5 3h2.500M5 5h2.500" /></Icon></StatusButton>
          </Views>
          <Views>
            <StatusButton aria-label="Slide sorter"><Icon w={11} h={9}><path d="M0 0h4.500v3.500H0zM6 0h4.500v3.500H6zM0 5h4.500v3.500H0zM6 5h4.500v3.500H6z" fill="currentColor" stroke="none" /></Icon></StatusButton>
            <StatusButton aria-label="Reading view"><Icon w={11} h={10} sw={0.9}><path d="M5.500 1.800C4 .8 2.500.8.8 1.200v7.300c1.700-.4 3.200-.4 4.700.6 1.500-1 3-1 4.700-.6V1.200C8.500.8 7 .8 5.500 1.800zM5.500 1.800v7.300M2.300 3.300h1.500M2.300 5.300h1.500M7.200 3.300h1.500M7.200 5.300h1.500" /></Icon></StatusButton>
            <StatusButton aria-label="Slide show"><Icon w={11} h={10} sw={1.2}><path d="M.5 1h10M1.500 1v4.500h8V1M5.500 5.500V9M3.500 9h4" /></Icon></StatusButton>
          </Views>
          <ZoomControl>
            <StatusButton aria-label="Zoom out" onClick={() => setZoom(zoom - 1)}><Icon w={5} h={5} sw={1.2}><path d="M.5 2.500h4" /></Icon></StatusButton>
            <ZoomSlider type="range" min={0} max={200} value={zoom} onChange={(e) => setZoom(+e.target.value)} aria-label="Zoom" />
            <StatusButton aria-label="Zoom in" onClick={() => setZoom(zoom + 1)}><Icon w={5} h={5} sw={1.2}><path d="M.5 2.500h4M2.500.5v4" /></Icon></StatusButton>
            <ZoomValue>{zoom}%</ZoomValue>
          </ZoomControl>
          <StatusButton aria-label="Fit slide to window"><Icon w={10} h={10}><path d="M.8.800h8.400v8.400H.8zM2.500 2.500l1.700 1.700M7.500 2.500 5.800 4.200M2.500 7.500l1.700-1.700M7.500 7.500 5.800 5.800" /></Icon></StatusButton>
        </StatusGroup>
      </StatusBar>
    </Window>
  );
}
